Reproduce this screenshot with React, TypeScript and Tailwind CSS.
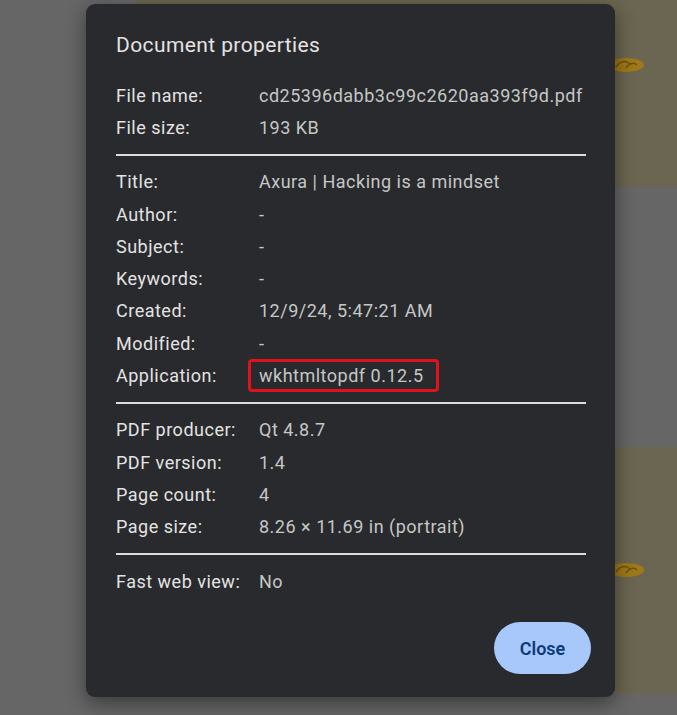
const rows1 = [
  ["File name:", "cd25396dabb3c99c2620aa393f9d.pdf"],
  ["File size:", "193 KB"],
];

const rows2 = [
  ["Title:", "Axura | Hacking is a mindset"],
  ["Author:", "-"],
  ["Subject:", "-"],
  ["Keywords:", "-"],
  ["Created:", "12/9/24, 5:47:21 AM"],
  ["Modified:", "-"],
];

const rows3 = [
  ["PDF producer:", "Qt 4.8.7"],
  ["PDF version:", "1.4"],
  ["Page count:", "4"],
  ["Page size:", "8.26 × 11.69 in (portrait)"],
];

const Row = ({ label, value }: { label: string; value: React.ReactNode }) => (
  <div className="flex h-[32.3px] items-center">
    <div className="w-[143px] shrink-0 text-[#e3e3e3]">{label}</div>
    <div className="text-[#c4c7c5]">{value}</div>
  </div>
);

const Divider = () => <div className="my-[10px] h-[2px] bg-[#dadce0]" />;

const Swirl = () => (
  <svg width="40" height="18" viewBox="0 0 40 18" className="ml-[-36px]">
    <ellipse cx="20" cy="9" rx="18" ry="7" fill="#a67a12" opacity="0.9" />
    <path d="M10 11 C14 5, 20 4, 24 8 M20 12 C23 7, 28 6, 31 9" stroke="#6b5314" strokeWidth="1.5" fill="none" />
  </svg>
);

const App = () => {
  return (
    <div className="relative h-[715px] w-[677px] overflow-hidden bg-[#666666] font-['Roboto',sans-serif]">
      {/* pdf pages behind the dialog */}
      <div className="flex flex-col pl-[136px]">
        <div className="flex h-[187px] items-center bg-[#6a6651] pl-[506px] pb-[57px]">
          <Swirl />
        </div>
        <div className="h-[260px]" />
        <div className="flex h-[247px] items-center bg-[#6a6651] pl-[506px] pt-[8px] pb-[10px]">
          <Swirl />
        </div>
      </div>

      {/* Document properties dialog */}
      <div className="absolute left-[86px] top-[4px] flex h-[693px] w-[529px] flex-col rounded-[9px] bg-[#292a2d] pt-[27px] pr-[29px] pl-[30px] shadow-[0_6px_20px_rgba(0,0,0,0.45)]">
        <h2 className="text-[21px] leading-[28px] tracking-[0.4px] text-[#e3e3e3]">Document properties</h2>
        <div className="mt-[20px] text-[18px] tracking-[0.5px]">
          {rows1.map(([l, v]) => (
            <Row key={l} label={l} value={v} />
          ))}
          <Divider />
          {rows2.map(([l, v]) => (
            <Row key={l} label={l} value={v} />
          ))}
          <Row
            label="Application:"
            value={
              <span className="relative">
                wkhtmltopdf 0.12.5
                <span className="absolute -left-[11px] -right-[15px] -top-[6px] -bottom-[6px] rounded-[4px] border-[3px] border-[#e0121b]" />
              </span>
            }
          />
          <Divider />
          {rows3.map(([l, v]) => (
            <Row key={l} label={l} value={v} />
          ))}
          <Divider />
          <Row label="Fast web view:" value="No" />
        </div>
        <div className="mt-auto mb-[23px] flex justify-end">
          <button className="mr-[-5px] h-[52px] w-[97px] rounded-full bg-[#a8c7fa] text-[18px] font-semibold text-[#0b3a7a]">
            Close
          </button>
        </div>
      </div>
    </div>
  );
};

export default App;
